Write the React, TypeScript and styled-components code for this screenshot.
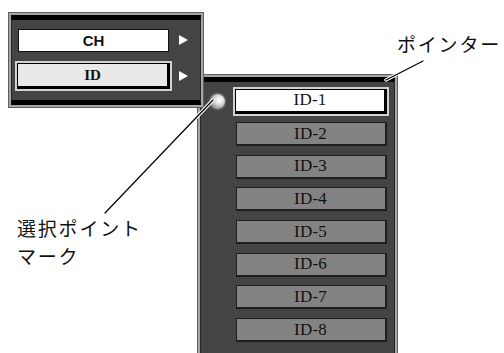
import React from "react";
import styled, { createGlobalStyle, css } from "styled-components";

const Global = createGlobalStyle`
  html, body { margin: 0; padding: 0; background: #fff; }
  body { width: 504px; height: 353px; overflow: hidden; }
`;

const Canvas = styled.div`
  position: relative;
  width: 504px;
  height: 353px;
  overflow: hidden;
  background: #fff;
  font-family: "Noto Sans CJK JP", "Noto Sans", sans-serif;
`;

const Window = styled.div<{ $x: number; $y: number; $w: number; $h: number; $z: number }>`
  position: absolute;
  left: ${(p) => p.$x}px;
  top: ${(p) => p.$y}px;
  width: ${(p) => p.$w}px;
  height: ${(p) => p.$h}px;
  z-index: ${(p) => p.$z};
  box-sizing: border-box;
  border: 1px solid #5e5e5e;
  padding: 2px;
  background: #a6a6a6;
  display: flex;
`;

const WindowBody = styled.div`
  flex: 1;
  box-sizing: border-box;
  background: #444;
  border-left: 1px solid #262626;
  border-right: 1px solid #262626;
  border-top: 5px solid #000;
  border-bottom: 5px solid #000;
  display: flex;
  flex-direction: column;
`;

const MenuList = styled.div`
  display: flex;
  flex-direction: column;
  gap: 6px;
  padding: 5px 0 0 3px;
`;

const MenuRow = styled.div`
  display: grid;
  grid-template-columns: 157px 9px;
  column-gap: 7px;
  height: 30px;
  align-items: center;
  justify-items: center;
`;

const sunken = css`
  box-sizing: border-box;
  outline: 2px solid #d2d2d2;
  outline-offset: 0;
  border-style: solid;
  border-color: #000;
  border-width: 1px 3px 3px 1px;
`;

const ButtonBase = styled.div`
  display: flex;
  align-items: center;
  justify-content: center;
  color: #111;
  box-sizing: border-box;
`;

const ChButton = styled(ButtonBase)`
  width: 151px;
  height: 23px;
  background: #fff;
  border: 1px solid #111;
  font-family: "Liberation Sans", Arial, sans-serif;
  font-weight: bold;
  font-size: 15px;
`;

const IdButton = styled(ButtonBase)`
  width: 153px;
  height: 26px;
  background: #e9e9e9;
  ${sunken}
  font-family: "Liberation Serif", "Times New Roman", serif;
  font-weight: bold;
  font-size: 15px;
`;

const Arrow = styled.span`
  width: 0;
  height: 0;
  border-left: 9px solid #fff;
  border-top: 5px solid transparent;
  border-bottom: 5px solid transparent;
`;

const IdList = styled.div`
  display: flex;
  flex-direction: column;
  padding-top: 3px;
`;

const IdRow = styled.div`
  display: grid;
  grid-template-columns: 32px 156px;
  height: 32.7px;
  align-items: center;
  justify-items: center;
`;

const Mark = styled.span`
  width: 15px;
  height: 15px;
  border-radius: 50%;
  background: radial-gradient(circle at 62% 40%, #fff 0%, #e6e6e6 28%, #a8a8a8 62%, #6a6a6a 100%);
  box-shadow: 0 0 2px 1px rgba(150, 150, 150, 0.6);
`;

const IdItem = styled(ButtonBase)<{ $selected?: boolean }>`
  font-family: "Liberation Serif", "Times New Roman", serif;
  font-size: 17px;
  letter-spacing: 0.2px;
  ${(p) =>
    p.$selected
      ? css`
          width: 152px;
          height: 25px;
          background: #fff;
          ${sunken}
        `
      : css`
          width: 151px;
          height: 24px;
          background: #838383;
          border-style: solid;
          border-color: #1e1e1e;
          border-width: 1px 2px 2px 1px;
        `}
`;

const Label = styled.div<{ $x: number; $y: number }>`
  position: absolute;
  left: ${(p) => p.$x}px;
  top: ${(p) => p.$y}px;
  z-index: 5;
  font-size: 19px;
  line-height: 28px;
  letter-spacing: 1.8px;
  color: #111;
  white-space: nowrap;
`;

const Leaders = styled.svg`
  position: absolute;
  left: 0;
  top: 0;
  z-index: 10;
  pointer-events: none;
`;

const ids = ["ID-1", "ID-2", "ID-3", "ID-4", "ID-5", "ID-6", "ID-7", "ID-8"];

export default function App() {
  return (
    <>
      <Global />
      <Canvas>
        <Window $x={197} $y={74} $w={201} $h={300} $z={1}>
          <WindowBody>
            <IdList>
              {ids.map((id, i) => (
                <IdRow key={id}>
                  {i === 0 ? <Mark /> : <span />}
                  <IdItem $selected={i === 0}>{id}</IdItem>
                </IdRow>
              ))}
            </IdList>
          </WindowBody>
        </Window>

        <Window $x={8} $y={12} $w={196} $h={96} $z={2}>
          <WindowBody>
            <MenuList>
              <MenuRow>
                <ChButton>CH</ChButton>
                <Arrow />
              </MenuRow>
              <MenuRow>
                <IdButton>ID</IdButton>
                <Arrow />
              </MenuRow>
            </MenuList>
          </WindowBody>
        </Window>

        <Label $x={397} $y={30}>ポインター</Label>
        <Label $x={17} $y={214}>
          選択ポイント
          <br />
          マーク
        </Label>

        <Leaders width={504} height={353} viewBox="0 0 504 353">
          <g strokeLinecap="round">
            <line x1={105} y1={213} x2={213} y2={100} stroke="#fff" strokeWidth={3.5} />
            <line x1={105} y1={213} x2={213} y2={100} stroke="#000" strokeWidth={1.2} />
            <line x1={423} y1={61} x2={386} y2={80} stroke="#fff" strokeWidth={3.5} />
            <line x1={423} y1={61} x2={386} y2={80} stroke="#000" strokeWidth={1.2} />
          </g>
        </Leaders>
      </Canvas>
    </>
  );
}
